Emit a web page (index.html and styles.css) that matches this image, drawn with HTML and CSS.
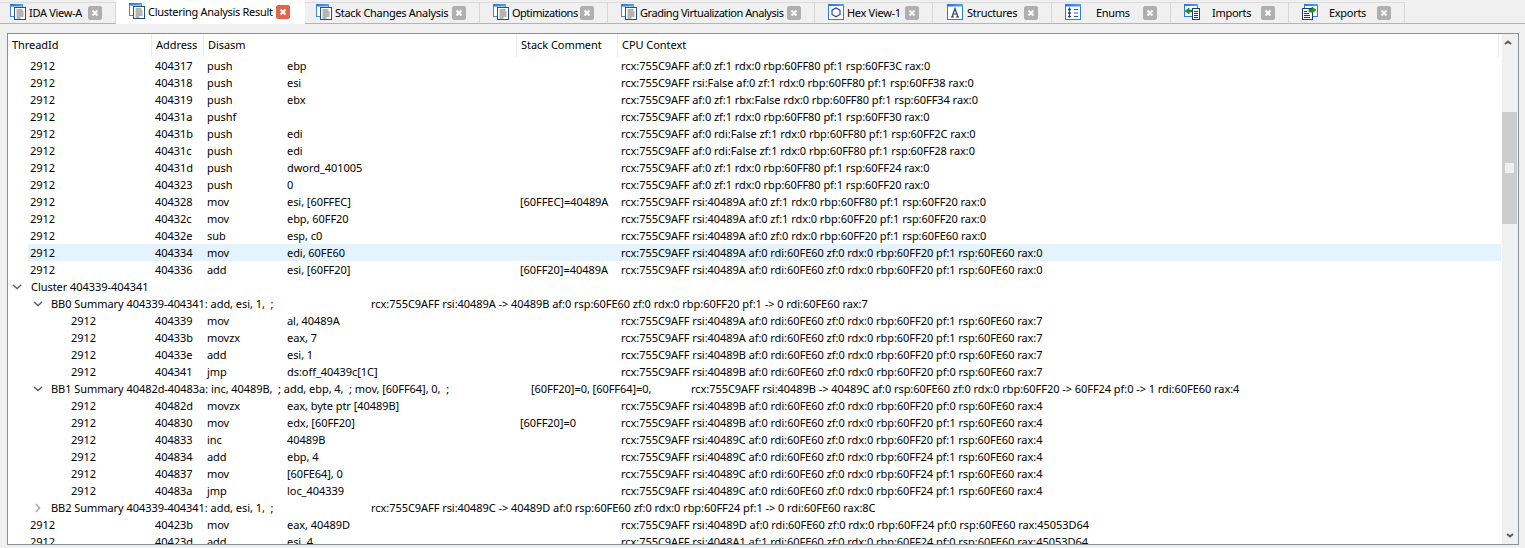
FILE: index.html
```html
<!DOCTYPE html>
<html lang="en">
<head>
<meta charset="utf-8">
<title>Clustering Analysis Result</title>
<link rel="stylesheet" href="styles.css">
</head>
<body>
<svg class="defs" width="0" height="0" aria-hidden="true">
  <defs>
    <linearGradient id="bar" x1="0" y1="0" x2="1" y2="0">
      <stop offset="0" stop-color="#2f6fd8"/>
      <stop offset="1" stop-color="#49a6f0"/>
    </linearGradient>
    <symbol id="i-doc" viewBox="0 0 16 16">
      <rect x="0.5" y="0.5" width="12" height="12" fill="#fff" stroke="#3b8ae6"/>
      <rect x="0" y="0" width="13" height="2.500" fill="url(#bar)"/>
      <rect x="4.500" y="3.500" width="11" height="12" fill="#fff" stroke="#24508f"/>
      <path d="M6.500 6h6M6.500 8h7M6.500 10h7M6.500 12h7M6.500 14h4" stroke="#6a6a6a" fill="none"/>
    </symbol>
    <symbol id="i-hex" viewBox="0 0 16 16">
      <rect x="0.5" y="0.5" width="15" height="15" fill="#fff" stroke="#2b7de0"/>
      <rect x="0" y="0" width="16" height="2" fill="url(#bar)"/>
      <path d="M8 4l4 2.200v4.200l-4 2.300-4-2.300V6.200z" fill="#fff" stroke="#2a3fc0" stroke-width="1.200"/>
    </symbol>
    <symbol id="i-struct" viewBox="0 0 16 16">
      <rect x="0.5" y="0.5" width="15" height="15" fill="#fff" stroke="#2b7de0"/>
      <rect x="0" y="0" width="16" height="2.500" fill="url(#bar)"/>
      <path d="M5 13L8 4.500L11 13M6 10h4M4 13h3M9 13h3" fill="none" stroke="#1d3f7a" stroke-width="1.200"/>
    </symbol>
    <symbol id="i-enum" viewBox="0 0 16 16">
      <rect x="0.5" y="0.5" width="15" height="15" fill="#fff" stroke="#2b7de0"/>
      <rect x="0" y="0" width="16" height="2.500" fill="url(#bar)"/>
      <path d="M4.500 3.500v10M9 5.500h4M9 9h4M9 12.500h4" fill="none" stroke="#1d5fb0"/>
      <path d="M3 5.500h3M3 9h3M3 12.500h3" fill="none" stroke="#0d3f9a" stroke-width="1.600"/>
    </symbol>
    <symbol id="i-imp" viewBox="0 0 16 16">
      <rect x="0.5" y="0.5" width="13" height="12" fill="#fff" stroke="#2b7de0"/>
      <rect x="0" y="0" width="14" height="2" fill="url(#bar)"/>
      <rect x="8.500" y="4.500" width="7" height="11" fill="#fff" stroke="#1d3f7a"/>
      <path d="M10 7.500h4M10 9.500h4M10 11.500h4M10 13.500h4" stroke="#1d3f7a" fill="none"/>
      <path d="M1 7l4-3v2h3v2H5v2z" fill="#1c9a2c" stroke="#0c5a14" stroke-width="0.500"/>
    </symbol>
    <symbol id="i-exp" viewBox="0 0 16 16">
      <rect x="2.500" y="0.500" width="13" height="12" fill="#fff" stroke="#2b7de0"/>
      <rect x="2" y="0" width="14" height="2" fill="url(#bar)"/>
      <rect x="0.500" y="4.500" width="10" height="11" fill="#fff" stroke="#1d3f7a"/>
      <path d="M2 7.500h3M2 9.500h5M2 11.500h6M2 13.500h6" stroke="#1d3f7a" fill="none"/>
      <path d="M14 6l-4-3v2H7v3h3v1z" fill="#1c9a2c" stroke="#0c5a14" stroke-width="0.500"/>
    </symbol>
    <symbol id="i-x" viewBox="0 0 14 14">
      <rect x="0.500" y="0.500" width="13" height="13" rx="1.500" fill="currentColor" stroke="currentColor" opacity="0.850"/>
      <path d="M4.500 4.500l5 5M9.500 4.500l-5 5" stroke="#fff" stroke-width="2" fill="none"/>
    </symbol>
    <symbol id="i-down" viewBox="0 0 10 6"><path d="M1 1l4 3.500L9 1" fill="none" stroke="currentColor" stroke-width="1.500"/></symbol>
    <symbol id="i-right" viewBox="0 0 6 10"><path d="M1 1l3.500 4L1 9" fill="none" stroke="currentColor" stroke-width="1.500"/></symbol>
    <symbol id="i-sb-down" viewBox="0 0 8 5"><path d="M1 1l3 2.500L7 1" fill="none" stroke="currentColor" stroke-width="2"/></symbol>
  </defs>
</svg>

<nav class="tabs">
  <div class="tab t1"><svg class="ic"><use href="#i-doc"/></svg><span>IDA View-A</span><svg class="x"><use href="#i-x"/></svg></div>
  <div class="tab t2 active"><svg class="ic"><use href="#i-doc"/></svg><span>Clustering Analysis Result</span><svg class="x"><use href="#i-x"/></svg></div>
  <div class="tab t3"><svg class="ic"><use href="#i-doc"/></svg><span>Stack Changes Analysis</span><svg class="x"><use href="#i-x"/></svg></div>
  <div class="tab t4"><svg class="ic"><use href="#i-doc"/></svg><span>Optimizations</span><svg class="x"><use href="#i-x"/></svg></div>
  <div class="tab t5"><svg class="ic"><use href="#i-doc"/></svg><span>Grading Virtualization Analysis</span><svg class="x"><use href="#i-x"/></svg></div>
  <div class="tab t6"><svg class="ic"><use href="#i-hex"/></svg><span>Hex View-1</span><svg class="x"><use href="#i-x"/></svg></div>
  <div class="tab t7"><svg class="ic"><use href="#i-struct"/></svg><span>Structures</span><svg class="x"><use href="#i-x"/></svg></div>
  <div class="tab t8"><svg class="ic"><use href="#i-enum"/></svg><span>Enums</span><svg class="x"><use href="#i-x"/></svg></div>
  <div class="tab t9"><svg class="ic"><use href="#i-imp"/></svg><span>Imports</span><svg class="x"><use href="#i-x"/></svg></div>
  <div class="tab t10"><svg class="ic"><use href="#i-exp"/></svg><span>Exports</span><svg class="x"><use href="#i-x"/></svg></div>
</nav>

<main class="panel">
  <div class="content">
    <div class="head">
      <div class="h h-thread">ThreadId</div>
      <div class="h h-addr">Address</div>
      <div class="h h-dis">Disasm</div>
      <div class="h h-stack">Stack Comment</div>
      <div class="h h-cpu">CPU Context</div>
    </div>
    <div class="rows" id="rows"></div>
  </div>
  <aside class="sb">
    <svg class="arrow up"><use href="#i-sb-down"/></svg>
    <div class="track"><div class="thumb"><div class="grip"></div></div></div>
    <svg class="arrow dn"><use href="#i-sb-down"/></svg>
  </aside>
</main>
<script src="rows.js"></script>
</body>
</html>
```
FILE: rows.js
```js
var D = [
 ['r',0,'404317','push','ebp','','rcx:755C9AFF af:0 zf:1 rdx:0 rbp:60FF80 pf:1 rsp:60FF3C rax:0'],
 ['r',0,'404318','push','esi','','rcx:755C9AFF rsi:False af:0 zf:1 rdx:0 rbp:60FF80 pf:1 rsp:60FF38 rax:0'],
 ['r',0,'404319','push','ebx','','rcx:755C9AFF af:0 zf:1 rbx:False rdx:0 rbp:60FF80 pf:1 rsp:60FF34 rax:0'],
 ['r',0,'40431a','pushf','','','rcx:755C9AFF af:0 zf:1 rdx:0 rbp:60FF80 pf:1 rsp:60FF30 rax:0'],
 ['r',0,'40431b','push','edi','','rcx:755C9AFF af:0 rdi:False zf:1 rdx:0 rbp:60FF80 pf:1 rsp:60FF2C rax:0'],
 ['r',0,'40431c','push','edi','','rcx:755C9AFF af:0 rdi:False zf:1 rdx:0 rbp:60FF80 pf:1 rsp:60FF28 rax:0'],
 ['r',0,'40431d','push','dword_401005','','rcx:755C9AFF af:0 zf:1 rdx:0 rbp:60FF80 pf:1 rsp:60FF24 rax:0'],
 ['r',0,'404323','push','0','','rcx:755C9AFF af:0 zf:1 rdx:0 rbp:60FF80 pf:1 rsp:60FF20 rax:0'],
 ['r',0,'404328','mov','esi, [60FFEC]','[60FFEC]=40489A','rcx:755C9AFF rsi:40489A af:0 zf:1 rdx:0 rbp:60FF80 pf:1 rsp:60FF20 rax:0'],
 ['r',0,'40432c','mov','ebp, 60FF20','','rcx:755C9AFF rsi:40489A af:0 zf:1 rdx:0 rbp:60FF20 pf:1 rsp:60FF20 rax:0'],
 ['r',0,'40432e','sub','esp, c0','','rcx:755C9AFF rsi:40489A af:0 zf:0 rdx:0 rbp:60FF20 pf:1 rsp:60FE60 rax:0'],
 ['h',0,'404334','mov','edi, 60FE60','','rcx:755C9AFF rsi:40489A af:0 rdi:60FE60 zf:0 rdx:0 rbp:60FF20 pf:1 rsp:60FE60 rax:0'],
 ['r',0,'404336','add','esi, [60FF20]','[60FF20]=40489A','rcx:755C9AFF rsi:40489A af:0 rdi:60FE60 zf:0 rdx:0 rbp:60FF20 pf:1 rsp:60FE60 rax:0'],
 ['c','Cluster 404339-404341'],
 ['s','down','BB0 Summary 404339-404341: add, esi, 1,  ;','','rcx:755C9AFF rsi:40489A -> 40489B af:0 rsp:60FE60 zf:0 rdx:0 rbp:60FF20 pf:1 -> 0 rdi:60FE60 rax:7'],
 ['r',1,'404339','mov','al, 40489A','','rcx:755C9AFF rsi:40489A af:0 rdi:60FE60 zf:0 rdx:0 rbp:60FF20 pf:1 rsp:60FE60 rax:7'],
 ['r',1,'40433b','movzx','eax, 7','','rcx:755C9AFF rsi:40489A af:0 rdi:60FE60 zf:0 rdx:0 rbp:60FF20 pf:1 rsp:60FE60 rax:7'],
 ['r',1,'40433e','add','esi, 1','','rcx:755C9AFF rsi:40489B af:0 rdi:60FE60 zf:0 rdx:0 rbp:60FF20 pf:0 rsp:60FE60 rax:7'],
 ['r',1,'404341','jmp','ds:off_40439c[1C]','','rcx:755C9AFF rsi:40489B af:0 rdi:60FE60 zf:0 rdx:0 rbp:60FF20 pf:0 rsp:60FE60 rax:7'],
 ['s','down','BB1 Summary 40482d-40483a: inc, 40489B,  ; add, ebp, 4,  ; mov, [60FF64], 0,  ;','[60FF20]=0, [60FF64]=0,','rcx:755C9AFF rsi:40489B -> 40489C af:0 rsp:60FE60 zf:0 rdx:0 rbp:60FF20 -> 60FF24 pf:0 -> 1 rdi:60FE60 rax:4'],
 ['r',1,'40482d','movzx','eax, byte ptr [40489B]','','rcx:755C9AFF rsi:40489B af:0 rdi:60FE60 zf:0 rdx:0 rbp:60FF20 pf:0 rsp:60FE60 rax:4'],
 ['r',1,'404830','mov','edx, [60FF20]','[60FF20]=0','rcx:755C9AFF rsi:40489B af:0 rdi:60FE60 zf:0 rdx:0 rbp:60FF20 pf:1 rsp:60FE60 rax:4'],
 ['r',1,'404833','inc','40489B','','rcx:755C9AFF rsi:40489C af:0 rdi:60FE60 zf:0 rdx:0 rbp:60FF20 pf:1 rsp:60FE60 rax:4'],
 ['r',1,'404834','add','ebp, 4','','rcx:755C9AFF rsi:40489C af:0 rdi:60FE60 zf:0 rdx:0 rbp:60FF24 pf:1 rsp:60FE60 rax:4'],
 ['r',1,'404837','mov','[60FE64], 0','','rcx:755C9AFF rsi:40489C af:0 rdi:60FE60 zf:0 rdx:0 rbp:60FF24 pf:1 rsp:60FE60 rax:4'],
 ['r',1,'40483a','jmp','loc_404339','','rcx:755C9AFF rsi:40489C af:0 rdi:60FE60 zf:0 rdx:0 rbp:60FF24 pf:1 rsp:60FE60 rax:4'],
 ['s','right','BB2 Summary 404339-404341: add, esi, 1,  ;','','rcx:755C9AFF rsi:40489C -> 40489D af:0 rsp:60FE60 zf:0 rdx:0 rbp:60FF24 pf:1 -> 0 rdi:60FE60 rax:8C'],
 ['r',0,'40423b','mov','eax, 40489D','','rcx:755C9AFF rsi:40489D af:0 rdi:60FE60 zf:0 rdx:0 rbp:60FF24 pf:0 rsp:60FE60 rax:45053D64'],
 ['r',0,'40423d','add','esi, 4','','rcx:755C9AFF rsi:4048A1 af:1 rdi:60FE60 zf:0 rdx:0 rbp:60FF24 pf:0 rsp:60FE60 rax:45053D64']
];
function cell(cls, text) {
  var s = document.createElement('span');
  s.className = cls;
  s.textContent = text;
  return s;
}
function chev(kind, cls) {
  var ns = 'http://www.w3.org/2000/svg';
  var svg = document.createElementNS(ns, 'svg');
  svg.setAttribute('class', 'chev ' + cls);
  var u = document.createElementNS(ns, 'use');
  u.setAttribute('href', '#i-' + kind);
  svg.appendChild(u);
  return svg;
}
var host = document.getElementById('rows');
D.forEach(function (d) {
  var row = document.createElement('div');
  if (d[0] === 'c') {
    row.className = 'row cluster';
    row.appendChild(chev('down', 'down'));
    row.appendChild(cell('label', d[1]));
  } else if (d[0] === 's') {
    row.className = 'row summary' + (d[3] ? ' has-comment' : '');
    row.appendChild(chev(d[1], d[1]));
    row.appendChild(cell('label', d[2]));
    if (d[3]) row.appendChild(cell('s-comment', d[3]));
    row.appendChild(cell('cpu', d[4]));
  } else {
    row.className = 'row data' + (d[1] ? ' nested' : '') + (d[0] === 'h' ? ' hl' : '');
    row.appendChild(cell('thread', '2912'));
    row.appendChild(cell('addr', d[2]));
    row.appendChild(cell('mn', d[3]));
    row.appendChild(cell('op', d[4]));
    row.appendChild(cell('stack', d[5]));
    row.appendChild(cell('cpu', d[6]));
  }
  host.appendChild(row);
});
```
FILE: styles.css
```css
* { box-sizing: border-box; }
html, body { margin: 0; height: 100%; overflow: hidden; }
body {
  background: #f0f0f0;
  color: #000;
  font: 11px/17px "Noto Sans", "Open Sans", sans-serif;
  letter-spacing: -0.05px;
  width: 1525px;
  height: 548px;
}
.defs { display: block; height: 0; }

.tabs {
  display: flex;
  height: 24px;
  padding: 2px 0 0 0;
  border-bottom: 1px solid #b4b4b4;
}
.tab {
  display: flex;
  align-items: center;
  height: 21px;
  padding: 0 13px 2px 13px;
  background: #f0f0f0;
  border-top: 1px solid #dcdcdc;
  border-right: 1px solid #d6d6d6;
  white-space: nowrap;
}
.tab span { margin: 0 auto 0 3px; letter-spacing: -0.3px; }
.tab .ic { width: 16px; height: 16px; flex: none; }
.tab .x { width: 14px; height: 14px; margin-top: 2px; color: #a4a4a4; flex: none; }
.tab.active {
  height: 24px;
  margin-top: -2px;
  padding-right: 15px;
  background: #fff;
  border: 0;
  position: relative;
}
.tab.active .x { color: #e0492c; }
.t1 { width: 116px; padding-left: 10px; }
.t2 { width: 189px; }
.t3 { width: 175px; padding-left: 11px; }
.t4 { width: 128px; }
.t4 span { letter-spacing: -0.5px; }
.t5 { width: 207px; }
.t5 span { letter-spacing: -0.45px; }
.t6 { width: 118px; }
.t7 { width: 119px; padding-left: 14px; }
.t7 span { margin-left: 4px; }
.t8 { width: 119px; }
.t8 span { margin-left: 15px; }
.t9 { width: 118px; }
.t9 span { margin-left: 12px; }
.t10 { width: 116px; }
.t10 span { margin-left: 11px; }

.panel {
  display: flex;
  width: 1512px;
  height: 512px;
  margin: 9px 0 0 7px;
  border: 1px solid #8a8f94;
  background: #fff;
  overflow: hidden;
}
.content { flex: 1; min-width: 0; overflow: hidden; }
.head { display: flex; height: 23px; align-items: stretch; }
.h { padding: 2px 3px 0 4px; border-right: 1px solid #ececec; white-space: nowrap; flex: none; }
.h-thread { width: 144px; }
.h-addr { width: 52px; }
.h-dis { width: 313px; }
.h-stack { width: 101px; }
.h-cpu { width: 881px; }

.row { display: flex; height: 17px; white-space: pre; }
.rows { margin-right: 1px; }
.thread { width: 144px; padding-left: 22px; flex: none; }
.nested .thread { padding-left: 63px; }
.addr { width: 52px; padding-left: 3px; flex: none; }
.mn { width: 83px; padding-left: 3px; flex: none; }
.op { width: 230px; flex: none; }
.stack { width: 101px; padding-left: 3px; flex: none; }
.cpu { padding-left: 3px; }
.hl { background: linear-gradient(#e5f3fe, #e5f3fe) no-repeat 20px 0; }

.chev { flex: none; color: #5f5f5f; }
.chev.down { width: 10px; height: 6px; margin-top: 6px; }
.chev.right { width: 6px; height: 10px; margin-top: 4px; margin-left: 2px; margin-right: 2px; color: #a6a6a6; }
.cluster { padding-left: 4px; }
.cluster .label { margin-left: 9px; }
.summary { padding-left: 25px; }
.summary .label { margin-left: 8px; width: 320px; flex: none; }
.summary .cpu { padding-left: 0; }
.has-comment .label { width: 480px; }
.s-comment { width: 160px; flex: none; }

.sb { width: 16px; flex: none; display: flex; flex-direction: column; background: #f0f0f0; }
.arrow { width: 8px; height: 5px; margin-top: 6px; margin-bottom: 6px; color: #5a5a5a; flex: none; }
.arrow.up { margin-left: 2px; transform: scaleY(-1); }
.arrow.dn { margin-left: 4px; }
.track { flex: 1; padding-top: 61px; }
.thumb { width: 15px; height: 112px; background: #cdcdcd; display: flex; align-items: center; justify-content: center; }
.grip { width: 9px; height: 10px; background: #f0f0f0; }
```
